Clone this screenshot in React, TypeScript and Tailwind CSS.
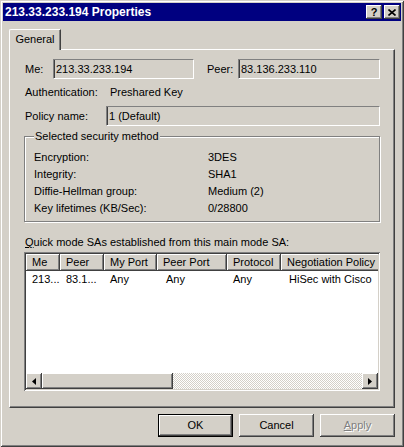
import { ReactNode } from "react";

const raised =
  "shadow-[inset_-1px_-1px_#404040,inset_1px_1px_#ffffff,inset_-2px_-2px_#808080,inset_2px_2px_#d4d0c8]";
const sunken =
  "shadow-[inset_1px_1px_#808080,inset_-1px_-1px_#ffffff,inset_2px_2px_#404040,inset_-2px_-2px_#d4d0c8]";
const field = "border-t border-l border-[#808080] border-b border-r border-b-white border-r-white";

function ReadField({ value, w }: { value: string; w: string }) {
  return (
    <div className={`${field} ${w} h-[20px] flex items-center pl-[2px] shadow-[inset_1px_0_#404040]`}>
      {value}
    </div>
  );
}

function HeaderCell({ children, w }: { children: ReactNode; w: string }) {
  return (
    <div className={`${w} h-[17px] shrink-0 flex items-center pl-[6px] ${raised} whitespace-nowrap overflow-hidden`}>
      {children}
    </div>
  );
}

const securityRows = [
  ["Encryption:", "3DES"],
  ["Integrity:", "SHA1"],
  ["Diffie-Hellman group:", "Medium (2)"],
  ["Key lifetimes (KB/Sec):", "0/28800"],
];

function Arrow({ dir }: { dir: "left" | "right" }) {
  return (
    <div className={`w-[16px] h-[16px] shrink-0 flex items-center justify-center bg-[#d4d0c8] ${raised}`}>
      <svg width="4" height="7" viewBox="0 0 4 7">
        {dir === "left" ? <path d="M4 0 L0 3.5 L4 7 Z" fill="#000" /> : <path d="M0 0 L4 3.5 L0 7 Z" fill="#000" />}
      </svg>
    </div>
  );
}

export default function App() {
  return (
    <div className="w-[404px] h-[447px] bg-[#d4d0c8] p-[3px] font-['Liberation_Sans',Arial,sans-serif] text-[11px] leading-[13px] text-black shadow-[inset_1px_1px_#d4d0c8,inset_-1px_-1px_#404040,inset_2px_2px_#ffffff,inset_-2px_-2px_#808080] overflow-hidden">
      {/* title bar */}
      <div className="h-[18px] bg-[#000080] flex items-center justify-between pl-[2px] pr-[1px]">
        <span className="text-white font-bold text-[12px] leading-[14px]">213.33.233.194 Properties</span>
        <div className="flex gap-[2px]">
          <div className={`w-[16px] h-[14px] bg-[#d4d0c8] ${raised} flex items-center justify-center font-bold text-[11px] leading-none`}>?</div>
          <div className={`w-[16px] h-[14px] bg-[#d4d0c8] ${raised} flex items-center justify-center`}>
            <svg width="8" height="7" viewBox="0 0 8 7">
              <path d="M0.5 0.5 L7.5 6.5 M7.5 0.5 L0.5 6.5" stroke="#000" strokeWidth="1.6" />
            </svg>
          </div>
        </div>
      </div>

      {/* tabs */}
      <div className="pl-[6px] pt-[8px] flex">
        <div className="relative z-10 -mb-px w-[52px] h-[21px] bg-[#d4d0c8] border-l border-t border-white rounded-tl-[2px] shadow-[inset_-1px_0_#808080] border-r border-r-[#404040] flex items-center justify-center pb-[1px]">
          General
        </div>
      </div>

      {/* panel */}
      <div className="ml-[6px] w-[386px] h-[359px] border-t border-l border-white border-r border-b border-r-[#404040] border-b-[#404040] shadow-[inset_-1px_-1px_#808080] pl-[14px]">
        <div className="flex items-center mt-[9px] h-[20px]">
          <span className="w-[29px] pl-[1px]">Me:</span>
          <ReadField value="213.33.233.194" w="w-[141px]" />
          <span className="w-[31px] ml-[13px]">Peer:</span>
          <ReadField value="83.136.233.110" w="w-[142px]" />
        </div>

        <div className="flex items-center mt-[5px] h-[16px]">
          <span className="w-[86px] pl-[1px]">Authentication:</span>
          <span>Preshared Key</span>
        </div>

        <div className="flex items-center mt-[6px] h-[20px]">
          <span className="w-[82px] pl-[1px]">Policy name:</span>
          <ReadField value="1 (Default)" w="w-[274px]" />
        </div>

        {/* group box */}
        <div className="mt-[10px] w-[356px] h-[86px] border border-[#808080] shadow-[inset_1px_1px_#ffffff,1px_1px_#ffffff]">
          <div className="-mt-[7px] ml-[9px] px-[1px] w-fit bg-[#d4d0c8]">Selected security method</div>
          <div className="mt-[6px] pl-[9px]">
            {securityRows.map(([k, v]) => (
              <div key={k} className="flex h-[17px] items-center">
                <span className="w-[174px]">{k}</span>
                <span>{v}</span>
              </div>
            ))}
          </div>
        </div>

        <div className="mt-[14px] pl-[1px]">
          <span className="underline">Q</span>uick mode SAs established from this main mode SA:
        </div>

        {/* list view */}
        <div className={`mt-[3px] w-[356px] h-[139px] bg-white p-[2px] flex flex-col ${sunken}`}>
          <div className="flex bg-[#d4d0c8] overflow-hidden">
            <HeaderCell w="w-[34px]">Me</HeaderCell>
            <HeaderCell w="w-[44px]">Peer</HeaderCell>
            <HeaderCell w="w-[53px]">My Port</HeaderCell>
            <HeaderCell w="w-[70px]">Peer Port</HeaderCell>
            <HeaderCell w="w-[54px]">Protocol</HeaderCell>
            <HeaderCell w="w-[110px]">Negotiation Policy</HeaderCell>
          </div>
          <div className="flex h-[14px] items-center whitespace-nowrap mt-[1px]">
            <span className="w-[34px] pl-[6px]">213...</span>
            <span className="w-[44px] pl-[6px]">83.1...</span>
            <span className="w-[53px] pl-[6px]">Any</span>
            <span className="w-[70px] pl-[9px]">Any</span>
            <span className="w-[54px] pl-[6px]">Any</span>
            <span className="pl-[8px]">HiSec with Cisco</span>
          </div>
          <div className="flex-1" />
          <div className="flex h-[16px]">
            <Arrow dir="left" />
            <div className={`w-[131px] h-[16px] bg-[#d4d0c8] ${raised}`} />
            <div className="flex-1 bg-[repeating-conic-gradient(#ffffff_0_25%,#d4d0c8_0_50%)] bg-[length:2px_2px]" />
            <Arrow dir="right" />
          </div>
        </div>
      </div>

      {/* buttons */}
      <div className="flex justify-end gap-[6px] pr-[6px] mt-[6px]">
        <div className="w-[75px] h-[23px] flex items-center justify-center border border-black shadow-[inset_-1px_-1px_#404040,inset_1px_1px_#ffffff,inset_-2px_-2px_#808080]">
          OK
        </div>
        <div className={`w-[75px] h-[23px] flex items-center justify-center ${raised}`}>Cancel</div>
        <div className={`w-[75px] h-[23px] flex items-center justify-center text-[#808080] [text-shadow:1px_1px_#ffffff] ${raised}`}>
          <span><span className="underline">A</span>pply</span>
        </div>
      </div>
    </div>
  );
}
